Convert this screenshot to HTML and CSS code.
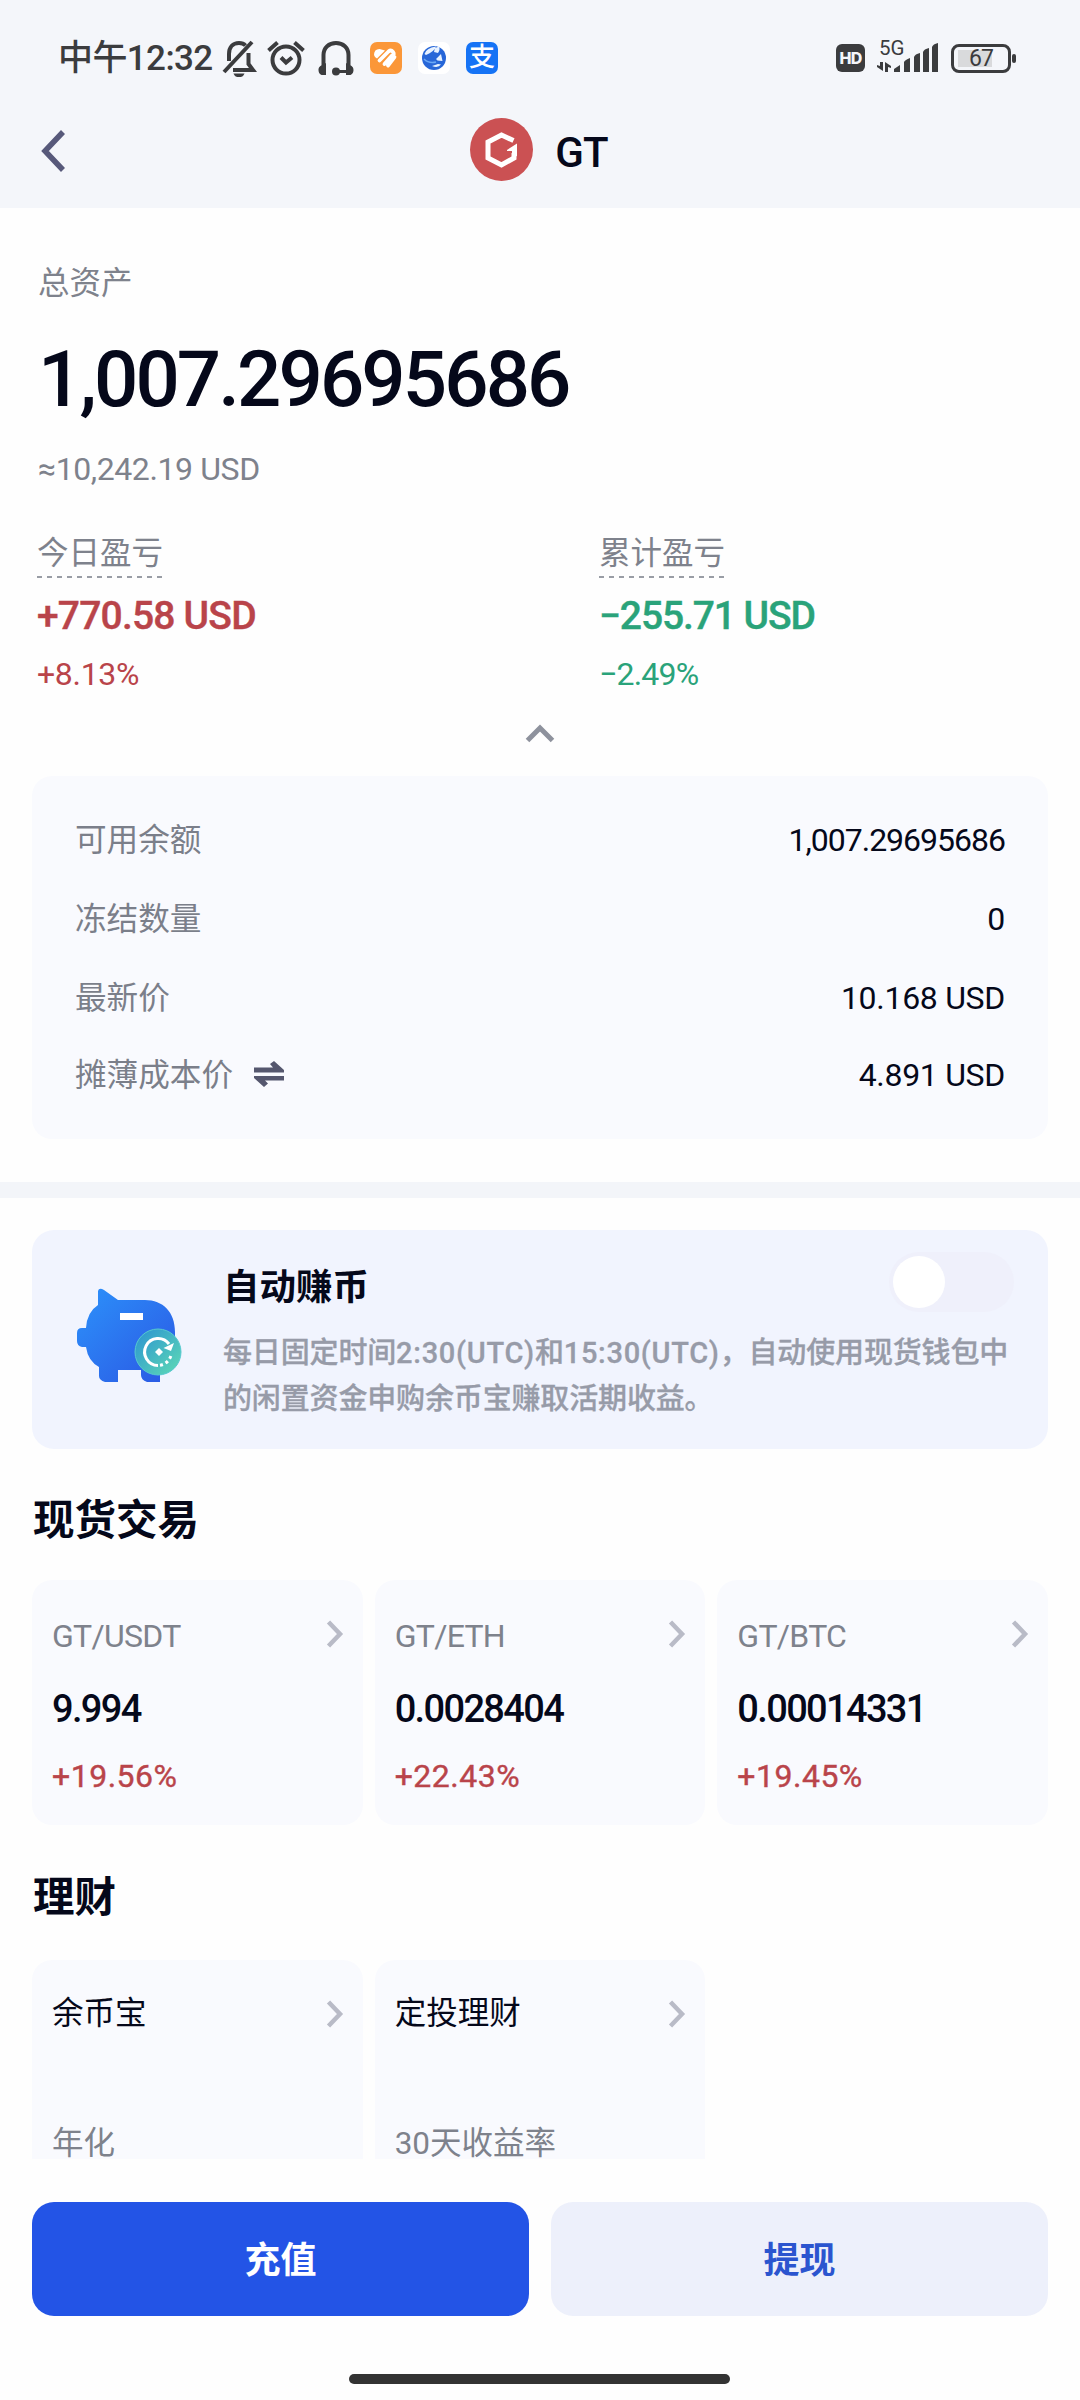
FILE: index.html
```html
<!DOCTYPE html>
<html lang="zh-CN">
<head>
<meta charset="utf-8">
<title>GT</title>
<link rel="stylesheet" href="styles.css">
</head>
<body>
<div class="screen">
  <header class="top">
    <div class="status">
      <div class="status-left">
        <span class="clock">中午12:32</span>
        <svg class="ic-bell" width="36" height="38" viewBox="0 0 36 38" fill="none" stroke="#3b3c3e" stroke-width="4">
          <path d="M8 22V15C8 8 12 4 18 4c2.500 0 5 .8 6.500 2.500"/><path d="M3 33 31 3"/><path d="M12 31H32L27.500 25V14"/><path d="M12.500 34.500h11c-1 3-3 3.500-5.500 3.500s-4.500-.5-5.500-3.500z" fill="#3b3c3e" stroke="none"/>
        </svg>
        <svg class="ic-alarm" width="38" height="38" viewBox="0 0 38 38" fill="none" stroke="#3b3c3e" stroke-width="4">
          <circle cx="19" cy="21" r="13.500"/><path d="M14 18.500 19 23.500 25 18.500"/><path d="M1.500 11.500 10.500 3.500M36.500 11.500 27.500 3.500"/>
        </svg>
        <svg class="ic-head" width="36" height="36" viewBox="0 0 36 36" fill="none" stroke="#3b3c3e" stroke-width="4">
          <path d="M5.500 28V15C5.500 7.500 11 3 18 3s12.500 4.500 12.500 12v13"/><path d="M18 31.500h12" stroke-width="3"/><circle cx="18" cy="31.500" r="4" fill="#3b3c3e" stroke="none"/><path d="M8 23v12H3.500C1 34 .5 31.500 .5 30s.5-4 4-5zM28 23v12h4.500c2.500-1 3-3.500 3-5s-.5-4-4-5z" fill="#3b3c3e" stroke="none"/>
        </svg>
        <svg class="ic-app" width="32" height="32" viewBox="0 0 32 32">
          <rect width="32" height="32" rx="7" fill="#fb9738"/>
          <path d="M4 13Q4 7 9.500 7L15 8.500 7 16.500Q4.500 15 4 13z" fill="#fff"/><path d="M9.500 18.500 18.500 9.500Q21 7.500 23 10T22 13.500L14.500 22M24.500 15 18 23.500" stroke="#fff" stroke-width="3.800" fill="none" stroke-linejoin="round" stroke-linecap="round"/>
        </svg>
        <svg class="ic-app" width="32" height="32" viewBox="0 0 32 32">
          <rect width="32" height="32" rx="7" fill="#fff"/><circle cx="16" cy="16" r="12" fill="#2867d8"/>
          <path d="M6.500 12Q8 6 18 4.500 16 10 8 13zM17 6l4-1.500q1.500 3-1 6.500l-4-1zM18 17l5-5 1.500 7-5-.5zM14 24l6-2 3 .5q-3 4-9 1.500z" fill="#e8f2ff"/><path d="M6 17c4 4 8 4 12 3" stroke="#6ba8f5" stroke-width="1.500" fill="none"/>
        </svg>
        <span class="alipay">支</span>
      </div>
      <div class="status-right">
        <span class="hd">HD</span>
        <div class="net">
          <span class="g5">5G</span>
          <svg class="bars" width="62" height="30" viewBox="0 0 62 30" fill="#3b3c3e">
            <path d="M17 29V26l6-4v7zM27 29V19q1-2 6-4v14zM37 29V14q1-3 6-4v19zM46 29V9q1-3 6-4v24zM55 29V4q1-3 6-4v29z"/>
            <path d="M6 19v9L0 24v-2l3 1V19zM8 29V19l6 4v2l-3-1v5z"/>
          </svg>
        </div>
        <div class="battery"><span>67</span></div>
      </div>
    </div>
    <nav class="nav">
      <svg width="26" height="42" viewBox="0 0 26 42" fill="none" stroke="#57597a" stroke-width="5.500"><path d="M23 2 5 21 23 40"/></svg>
      <div class="coin">
        <svg width="63" height="63" viewBox="0 0 63 63"><circle cx="31.500" cy="31.500" r="31.500" fill="#cb5153"/><path d="M43.500 22.500 31.500 17 18 24v16l13.500 7 12.500-7v-5" fill="none" stroke="#fff" stroke-width="5"/><path d="M37 32 47 25.500V38l-5 2v-7h-5z" fill="#fff"/></svg>
        <span>GT</span>
      </div>
    </nav>
  </header>

  <section class="summary">
    <div class="label">总资产</div>
    <div class="total">1,007.29695686</div>
    <div class="approx">≈10,242.19 USD</div>
    <div class="pnl">
      <div class="pnl-col up"><span class="dotted">今日盈亏</span><b>+770.58 USD</b><i>+8.13%</i></div>
      <div class="pnl-col down"><span class="dotted">累计盈亏</span><b>−255.71 USD</b><i>−2.49%</i></div>
    </div>
    <svg class="caret" width="30" height="20" viewBox="0 0 30 20" fill="none" stroke="#8e929d" stroke-width="5"><path d="M2.500 17.500 15 5 27.500 17.500"/></svg>
    <dl class="detail">
      <div class="row"><dt>可用余额</dt><dd class="wide">1,007.29695686</dd></div>
      <div class="row"><dt>冻结数量</dt><dd>0</dd></div>
      <div class="row"><dt>最新价</dt><dd>10.168 USD</dd></div>
      <div class="row last"><dt>摊薄成本价 <svg width="30" height="26" viewBox="0 0 30 26" fill="#55576e"><path d="M0 6.500H19L16 3l4-3 10 9v2.500H0zM30 19.500H11l3 3L10 26 0 17v-2h30z"/></svg></dt><dd>4.891 USD</dd></div>
    </dl>
  </section>

  <main class="content">
    <section class="earn">
      <svg class="pig" width="106" height="96" viewBox="0 0 106 96">
        <defs>
          <linearGradient id="pigFill" x1="0" y1="0" x2="1" y2="1"><stop offset="0" stop-color="#2c92fb"/><stop offset="1" stop-color="#2b57e3"/></linearGradient>
          <linearGradient id="coinFill" x1="0" y1="0" x2="1" y2="1"><stop offset="0" stop-color="#2a92d2"/><stop offset="1" stop-color="#5fdcb4"/></linearGradient>
        </defs>
        <path d="M21 3q1-4 6-1L41 12H68c18 0 30 12 30 32v10q0 12-15 20V94H70q-6-2-6-7V82H41V94H28q-6-2-6-6V79Q11 73 9 59H5q-5-1-5-6V45q0-5 5-5H9Q10 24 21 17z" fill="url(#pigFill)"/>
        <rect x="43" y="25" width="23" height="7" fill="#fff"/>
        <circle cx="81" cy="64" r="23" fill="url(#coinFill)" stroke="#56c9cf"/>
        <path d="M92 56a13.500 13.500 0 1 0-11 21.500" fill="none" stroke="#fff" stroke-width="3"/><path d="M83 77.300a13.500 13.500 0 0 0 11-10" fill="none" stroke="#fff" stroke-width="3" stroke-dasharray="3 3"/>
        <path d="M86.500 60 97 55l-3 8zM82 60l4 4-4 4-4-4z" fill="#fff"/>
      </svg>
      <div class="earn-body">
        <div class="earn-head"><h3>自动赚币</h3><div class="toggle"><span></span></div></div>
        <p>每日固定时间<span class="utc">2:30(UTC)</span>和<span class="utc">15:30(UTC)</span>，自动使用现货钱包中<br>的闲置资金申购余币宝赚取活期收益。</p>
      </div>
    </section>

    <h2 class="h-spot">现货交易</h2>
    <div class="cards">
      <article class="card"><div class="card-top"><span class="gray">GT/USDT</span><svg width="18" height="28" viewBox="0 0 18 28" class="chev"><path d="M2.500 2 14 14 2.500 26"/></svg></div><strong>9.994</strong><em>+19.56%</em></article>
      <article class="card"><div class="card-top"><span class="gray">GT/ETH</span><svg width="18" height="28" viewBox="0 0 18 28" class="chev"><path d="M2.500 2 14 14 2.500 26"/></svg></div><strong>0.0028404</strong><em>+22.43%</em></article>
      <article class="card"><div class="card-top"><span class="gray">GT/BTC</span><svg width="18" height="28" viewBox="0 0 18 28" class="chev"><path d="M2.500 2 14 14 2.500 26"/></svg></div><strong>0.00014331</strong><em>+19.45%</em></article>
    </div>
    <h2 class="h-fin">理财</h2>
    <div class="cards">
      <article class="card fin"><div class="card-top"><span>余币宝</span><svg width="18" height="28" viewBox="0 0 18 28" class="chev"><path d="M2.500 2 14 14 2.500 26"/></svg></div><div class="rate">年化</div></article>
      <article class="card fin"><div class="card-top"><span>定投理财</span><svg width="18" height="28" viewBox="0 0 18 28" class="chev"><path d="M2.500 2 14 14 2.500 26"/></svg></div><div class="rate">30天收益率</div></article>
    </div>
  </main>

  <footer class="actions">
    <div class="buttons"><button class="btn primary">充值</button><button class="btn ghost">提现</button></div>
    <div class="home"></div>
  </footer>
</div>
</body>
</html>
```
FILE: styles.css
```css
* { box-sizing: border-box; margin: 0; padding: 0; }
body { background: #fefefe; font-family: Roboto, "Noto Sans CJK SC", sans-serif; color: #05081a; }
.screen { width: 1080px; height: 2400px; display: flex; flex-direction: column; overflow: hidden; }
svg { display: block; flex: none; }

/* Header */
.top { height: 208px; background: #f4f6fa; }
.status { height: 104px; padding: 12px 69px 0 58px; display: flex; justify-content: space-between; align-items: center; color: #3b3c3e; }
.status-left, .status-right { display: flex; align-items: center; }
.clock { width: 163px; padding-top: 2px; font-size: 35px; line-height: 48px; font-weight: 500; letter-spacing: -.6px; white-space: nowrap; }
.ic-alarm { margin-left: 10px; }
.ic-head { margin-left: 13px; }
.ic-app { margin-left: 16px; }
.alipay { width: 32px; height: 32px; margin-left: 16px; border-radius: 7px; background: #1573f5; color: #fff; font-size: 26px; font-weight: 500; line-height: 31px; text-align: center; overflow: hidden; }
.hd { width: 29px; height: 28px; border-radius: 6px; background: #3b3c3e; color: #f4f6fa; font: 800 16px/28px Inter, sans-serif; text-align: center; letter-spacing: -.8px; }
.net { position: relative; margin-left: 12px; width: 62px; height: 30px; }
.g5 { position: absolute; left: 2px; top: -5px; font-size: 20.500px; line-height: 20px; }
.battery { position: relative; margin-left: 12px; width: 60px; height: 29px; border: 3px solid #3b3c3e; border-radius: 8px; background: linear-gradient(#d9dadc, #d9dadc) 4px 3px / 34px 17px no-repeat; text-align: center; }
.battery span { display: block; font-size: 23px; line-height: 24px; letter-spacing: -1px; }
.battery::after { content: ""; position: absolute; right: -8px; top: 7px; width: 4px; height: 9px; border-radius: 2px; background: #3b3c3e; }
.nav { height: 92px; padding: 0 42px 0 40px; display: grid; grid-template-columns: 26px 1fr 26px; align-items: center; }
.nav > svg { margin-top: 2px; }
.coin { display: flex; justify-content: center; align-items: center; gap: 22px; font-size: 42px; font-weight: 500; line-height: 60px; letter-spacing: -.8px; }
.coin span { padding-top: 5px; }
.coin svg { margin-bottom: 1px; }

/* Asset summary */
.summary { height: 990px; padding: 52px 32px 0; border-bottom: 16px solid #f3f5f9; display: flex; flex-direction: column; }
.label { height: 48px; margin-left: 6px; font-size: 31.5px; line-height: 48px; color: #7e828c; }
.total { height: 100px; margin: 22px 0 0 6px; font-size: 78px; line-height: 100px; font-weight: 500; letter-spacing: -2.900px; }
.approx { height: 44px; margin: 17px 0 0 6px; font-size: 32px; line-height: 44px; color: #7e828c; letter-spacing: -.4px; }
.pnl { display: grid; grid-template-columns: 562px 1fr; margin: 39px 0 0 5px; height: 193px; }
.pnl-col { display: flex; flex-direction: column; align-items: flex-start; }
.dotted { height: 48px; font-size: 31.5px; line-height: 48px; color: #7e828c; background: repeating-linear-gradient(90deg, #999da5 0 5px, transparent 5px 10px) 0 100% / 100% 2px no-repeat; }
.pnl b { font-size: 39px; font-weight: 500; line-height: 50px; margin-top: 13px; letter-spacing: -.8px; -webkit-text-stroke: .4px; }
.pnl .down b { letter-spacing: -1.100px; }
.pnl i { font-style: normal; font-size: 32px; line-height: 44px; margin-top: 11px; letter-spacing: -.3px; }
.pnl .down i { letter-spacing: -.8px; }
.up, .card em { color: #b9444a; }
.down { color: #2aa37a; }
.caret { margin: 0 auto; }
.detail { height: 363px; margin-top: 33px; padding: 23px 43px 0; border-radius: 20px; background: #f9fafe; }
.row { height: 79px; display: flex; justify-content: space-between; align-items: center; font-size: 32px; }
.row.last { height: 75px; }
.row dt { display: flex; align-items: center; gap: 21px; font-size: 31.600px; color: #7b7f8a; padding-bottom: 3px; }
.row dt svg { margin-top: 3px; }
.row dd { padding-top: 2px; letter-spacing: -.3px; }
.row dd.wide { letter-spacing: -1px; }

/* Scrolling content */
.content { height: 961px; padding: 32px 32px 0; overflow: hidden; }
.earn { height: 219px; border-radius: 22px; background: #f1f4fe; display: flex; padding-left: 45px; }
.pig { margin-top: 58px; }
.earn-body { margin-left: 40px; flex: 1; }
.earn-head { height: 100px; padding: 22px 34px 0 0; display: flex; justify-content: space-between; }
.earn h3 { font-size: 36.500px; line-height: 71px; font-weight: 700; }
.toggle { width: 125px; height: 60px; border-radius: 30px; background: #eff0fb; padding: 4px; }
.toggle span { display: block; width: 52px; height: 52px; border-radius: 50%; background: #fff; }
.earn p { font-size: 29px; line-height: 46px; font-weight: 500; color: #979ba8; white-space: nowrap; letter-spacing: -.15px; -webkit-text-stroke: .3px; }
.utc { letter-spacing: .7px; }
h2 { font-size: 41.500px; line-height: 60px; font-weight: 700; padding-left: 1px; }
.h-spot { margin: 42px 0 29px; }
.h-fin { margin: 43px 0 32px; }
.cards { display: grid; grid-template-columns: repeat(3, 1fr); gap: 12px; }
.card { height: 245px; border-radius: 20px; background: #f9fafe; padding: 34px 19px 0 20px; display: flex; flex-direction: column; }
.card.fin { height: 199px; border-radius: 20px 20px 0 0; }
.card-top { height: 44px; display: flex; justify-content: space-between; font-size: 31.500px; line-height: 44px; }
.card-top .gray { font-size: 32px; color: #7e828c; letter-spacing: -.7px; }
.fin .card-top > span { line-height: 40px; }
.chev { margin-top: 6px; fill: none; stroke: #b9bbc7; stroke-width: 4.500px; }
.card strong { font-size: 38px; line-height: 50px; font-weight: 500; margin-top: 26px; letter-spacing: -1.650px; }
.card em { font-style: normal; font-size: 32px; line-height: 44px; margin-top: 20px; letter-spacing: .5px; -webkit-text-stroke: .4px; }
.rate { margin-top: 90px; font-size: 31.500px; line-height: 31px; color: #7e828c; }

/* Bottom bar */
.actions { height: 241px; padding: 43px 32px 0; background: #fefefe; }
.buttons { display: grid; grid-template-columns: 1fr 1fr; gap: 22px; }
.btn { height: 114px; border: 0; border-radius: 22px; padding-bottom: 5px; font: 700 36px/1 "Noto Sans CJK SC", sans-serif; }
.primary { background: #2354e6; color: #fff; }
.ghost { background: #edf0fb; color: #2b55cf; }
.home { width: 381px; height: 10px; margin: 58px 0 0 317px; border-radius: 5px; background: #333; }
```
